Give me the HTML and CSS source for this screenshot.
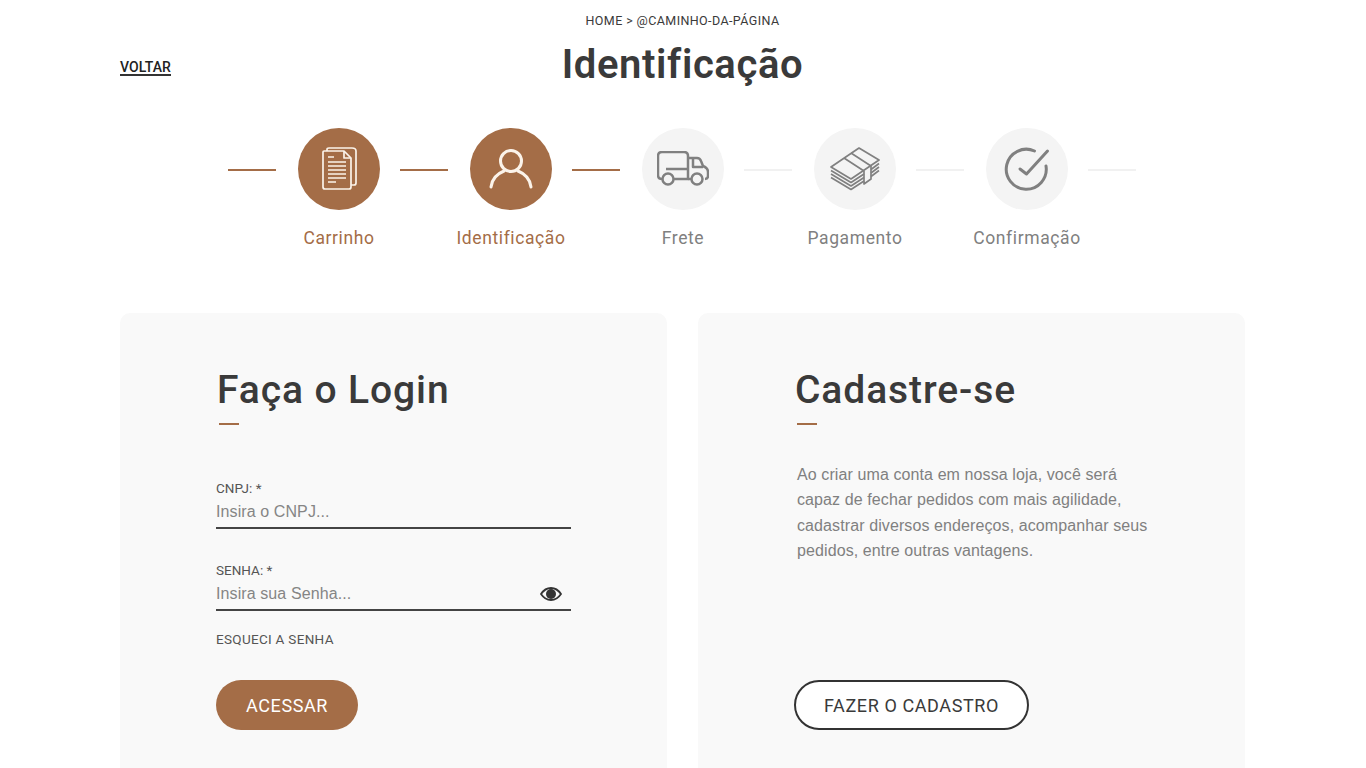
FILE: index.html
```html
<!DOCTYPE html>
<html lang="pt-BR">
<head>
  <meta charset="UTF-8" />
  <title>Identificação</title>
  <link rel="stylesheet" href="styles.css">
</head>
<body>
  <div class="page">
    <div class="breadcrumb">HOME &gt; @CAMINHO-DA-PÁGINA</div>
    <header class="top">
      <a class="back" href="#">VOLTAR</a>
      <h1>Identificação</h1>
    </header>

    <div class="steps">
      <span class="line done"></span>
      <div class="step done">
        <div class="circle">
          <svg width="36" height="44" viewBox="0 0 36 44" fill="none" stroke="currentColor" stroke-width="1.7" stroke-linejoin="round">
            <path d="M6 4V2.500Q6 1 8 1H31Q35 1 35 4V36Q35 38 33 38H30"/>
            <path d="M3 4H23L30 11V40Q30 42 28 42H4Q2 42 2 40V5Q2 4 3 4Z"/>
            <path d="M23 4V11H30"/>
            <path d="M7 10H13M7 15H25M7 19H25M7 23H25M7 27H25M7 31H25M7 35H15"/>
          </svg>
        </div>
        <span class="step-name">Carrinho</span>
      </div>
      <span class="line done"></span>
      <div class="step done">
        <div class="circle">
          <svg width="44" height="40" viewBox="0 0 44 40" fill="none" stroke="currentColor" stroke-width="3" stroke-linecap="round">
            <circle cx="22" cy="12" r="10.500"/>
            <path d="M2 38C3 29 10 24 15 22M42 38C41 29 34 24 29 22"/>
          </svg>
        </div>
        <span class="step-name">Identificação</span>
      </div>
      <span class="line done"></span>
      <div class="step">
        <div class="circle">
          <svg width="52" height="36" viewBox="0 0 52 36" fill="none" stroke="currentColor" stroke-width="2.500" stroke-linejoin="round">
            <path d="M5 28Q1 28 1 24V5Q1 1 5 1H27Q31 1 31 5V28H17"/>
            <path d="M31 7H40Q43 7 44 10L46 15Q51 17 51 21V25Q51 28 48 28M35 28H31"/>
            <path d="M36 7V16H46M9 18H31"/>
            <circle cx="11" cy="28" r="5.500"/>
            <circle cx="40" cy="28" r="5.500"/>
          </svg>
        </div>
        <span class="step-name">Frete</span>
      </div>
      <span class="line"></span>
      <div class="step">
        <div class="circle">
          <svg width="50" height="44" viewBox="0 0 50 44" fill="none" stroke="currentColor" stroke-width="1.700" stroke-linejoin="round">
            <path d="M1 20L29 1L49 13L21 32Z"/>
            <path d="M14 11L34 24M21 6L41 19"/>
            <path d="M1 23.500L21 35.500L34 27M1 27L21 39L34 30.500M1 30.500L21 42.500L34 34"/>
            <path d="M34 24V37L41 32V19"/>
            <path d="M41 22.500L49 16.500M41 26L49 20M41 29.500L49 23.500"/>
          </svg>
        </div>
        <span class="step-name">Pagamento</span>
      </div>
      <span class="line"></span>
      <div class="step">
        <div class="circle">
          <svg width="46" height="44" viewBox="0 0 46 44" fill="none" stroke="currentColor" stroke-width="3" stroke-linecap="round" stroke-linejoin="round">
            <path d="M30.500 4A20 20 0 1 0 42 19"/>
            <path d="M16 22L22.500 27L43.500 4"/>
          </svg>
        </div>
        <span class="step-name">Confirmação</span>
      </div>
      <span class="line"></span>
    </div>

    <div class="cards">
      <section class="card">
        <h2>Faça o Login</h2>
        <span class="dash"></span>
        <form class="login">
          <div class="field">
            <label>CNPJ: *</label>
            <div class="input-row"><input type="text" placeholder="Insira o CNPJ..."></div>
          </div>
          <div class="field">
            <label>SENHA: *</label>
            <div class="input-row">
              <input type="text" placeholder="Insira sua Senha...">
              <svg class="eye" width="22" height="14" viewBox="0 0 22 14">
                <path d="M1 7C4 2.500 7.500 1 11 1S18 2.500 21 7C18 11.500 14.500 13 11 13S4 11.500 1 7Z" fill="none" stroke="#333" stroke-width="1.800"/>
                <circle cx="11" cy="7" r="5" fill="#333"/>
              </svg>
            </div>
          </div>
          <a class="forgot" href="#">ESQUECI A SENHA</a>
          <button class="btn-fill" type="button">ACESSAR</button>
        </form>
      </section>
      <section class="card">
        <h2>Cadastre-se</h2>
        <span class="dash"></span>
        <p class="intro">Ao criar uma conta em nossa loja, você será capaz de fechar pedidos com mais agilidade, cadastrar diversos endereços, acompanhar seus pedidos, entre outras vantagens.</p>
        <button class="btn-line" type="button">FAZER O CADASTRO</button>
      </section>
    </div>
  </div>
</body>
</html>
```

FILE: styles.css
```css
:root {
  --brown: #a46d47;
  --dark: #3a3a3a;
  --soft: #555;
  --grey: #808080;
  --head-font: Roboto, sans-serif;
  --body-font: 'Liberation Sans', Arial, sans-serif;
}

body {
  margin: 0;
  height: 768px;
  overflow: hidden;
  background: #fff;
  color: var(--dark);
  font-family: var(--head-font);
}

.page {
  width: 1125px;
  margin-left: 120px;
}

.breadcrumb {
  padding-top: 13px;
  height: 16px;
  line-height: 16px;
  font-size: 12.500px;
  letter-spacing: 0.4px;
  text-align: center;
}

.top {
  display: grid;
  grid-template-columns: 1fr auto 1fr;
  align-items: center;
  margin-top: 8px;
  height: 56px;
}

.top h1 {
  grid-column: 2;
  grid-row: 1;
  margin: 0;
  font-size: 40px;
  line-height: 56px;
  font-weight: 600;
  letter-spacing: 0.6px;
}

.back {
  grid-column: 1;
  grid-row: 1;
  justify-self: start;
  margin-top: 6px;
  color: #222;
  font-size: 14px;
  line-height: 14px;
  font-weight: 500;
  letter-spacing: 0.1px;
  text-decoration: none;
  border-bottom: 2px solid #333;
}

.steps {
  display: flex;
  align-items: flex-start;
  margin-top: 35px;
  padding-left: 108px;
}

.line {
  flex: none;
  width: 48px;
  height: 2px;
  margin-top: 41px;
  background: #f1f1f1;
}

.line.done {
  background: var(--brown);
}

.step {
  flex: none;
  width: 82px;
  margin: 0 20px 0 22px;
  display: flex;
  flex-direction: column;
  align-items: center;
  color: var(--grey);
}

.circle {
  width: 82px;
  height: 82px;
  border-radius: 50%;
  background: #f4f4f4;
  display: flex;
  align-items: center;
  justify-content: center;
}

.step.done .circle {
  background: var(--brown);
  color: #fbf3ea;
}

.step.done .step-name {
  color: var(--brown);
}

.step-name {
  margin-top: 16px;
  font-size: 17.500px;
  line-height: 24px;
  letter-spacing: 0.6px;
  white-space: nowrap;
}

.cards {
  display: grid;
  grid-template-columns: 547px 547px;
  gap: 31px;
  margin-top: 63px;
}

.card {
  height: 480px;
  padding: 51px 96px 0;
  background: #f9f9f9;
  border-radius: 10px;
  box-sizing: border-box;
}

.card h2 {
  margin: 0 0 0 1px;
  font-size: 39px;
  line-height: 52px;
  font-weight: 500;
  letter-spacing: 0.9px;
}

.dash {
  display: block;
  width: 20px;
  height: 2px;
  margin: 7px 0 0 3px;
  background: var(--brown);
}

.login {
  margin-top: 54px;
  width: 355px;
}

.field {
  margin-bottom: 32px;
}

.field label {
  display: block;
  color: var(--soft);
  font-size: 13.500px;
  line-height: 18px;
}

.input-row {
  display: flex;
  align-items: center;
  height: 30px;
  border-bottom: 2px solid #444;
}

.input-row input {
  flex: 1;
  min-width: 0;
  padding: 0;
  border: none;
  outline: none;
  background: transparent;
  font-family: var(--body-font);
  font-size: 16px;
  letter-spacing: 0.1px;
}

.input-row input::placeholder {
  color: #858585;
  opacity: 1;
}

.eye {
  margin-right: 9px;
}

.forgot {
  display: block;
  margin-top: -13px;
  color: var(--soft);
  font-size: 13.500px;
  line-height: 18px;
  letter-spacing: 0.3px;
  text-decoration: none;
}

.btn-fill,
.btn-line {
  display: block;
  font-family: var(--head-font);
  font-size: 18px;
  letter-spacing: 0.6px;
  border-radius: 25px;
  height: 50px;
}

.btn-fill {
  margin-top: 32px;
  width: 142px;
  border: none;
  background: var(--brown);
  color: #fff;
}

.intro {
  width: 360px;
  height: 218px;
  margin: 37px 0 0 3px;
  color: var(--grey);
  font-family: var(--body-font);
  font-size: 16px;
  line-height: 25.300px;
  letter-spacing: 0.1px;
}

.btn-line {
  width: 235px;
  background: #fff;
  border: 2px solid #333;
  color: var(--dark);
}
```
